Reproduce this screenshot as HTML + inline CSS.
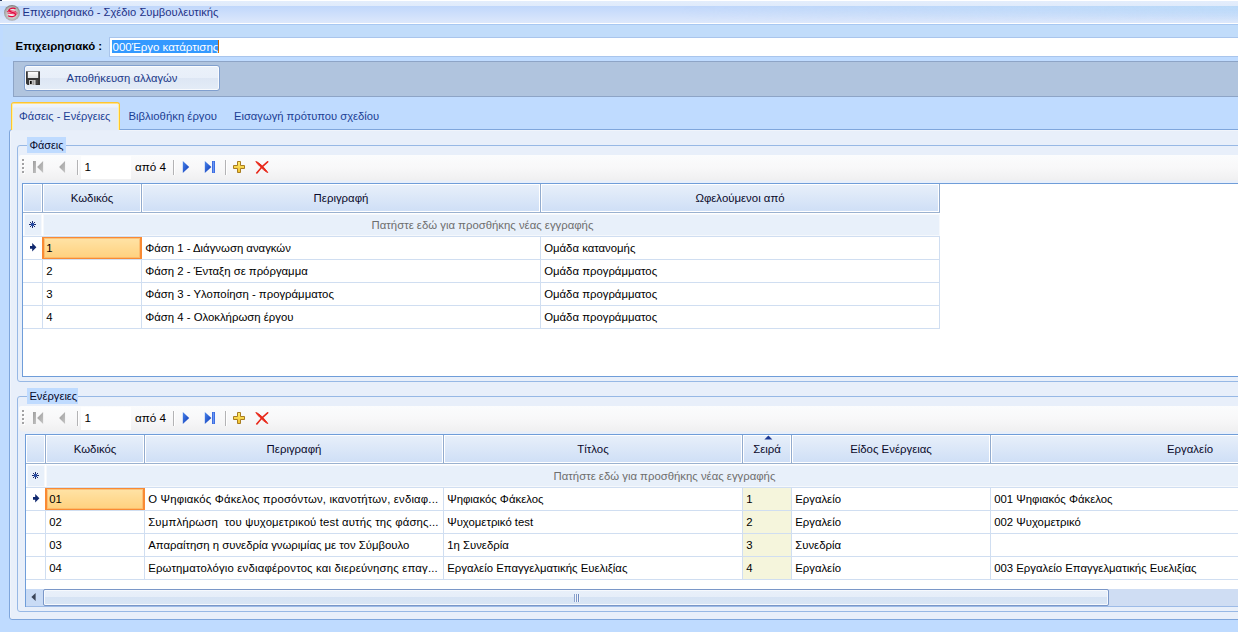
<!DOCTYPE html>
<html lang="el">
<head>
<meta charset="utf-8">
<title>Επιχειρησιακό - Σχέδιο Συμβουλευτικής</title>
<style>
*{box-sizing:border-box;margin:0;padding:0}
html,body{width:1238px;height:632px;overflow:hidden}
body{background:#BFDBFF;font-family:"Liberation Sans",sans-serif;font-size:11.2px;color:#000;position:relative}
.a{position:absolute;white-space:nowrap}
.t{position:absolute;white-space:nowrap;line-height:14px;height:14px}
#title{left:0;top:0;width:1238px;height:24px;background:linear-gradient(#fff 0,#fff 1px,#E3EDFC 1px,#E0EBFB 6px,#C0D7FB 6px,#DDE8FB 23px,#fff 23px,#fff 24px)}
#tgrad{left:0;top:6px;width:1238px;height:17px;background:linear-gradient(#BBDAF8,rgba(205,226,250,0) 90%);-webkit-mask-image:linear-gradient(90deg,transparent 55%,#000);mask-image:linear-gradient(90deg,transparent 55%,#000)}
#tline{left:0;top:24px;width:1238px;height:1px;background:#A8C8F2}
#corner{left:0;top:0;width:2px;height:1px;background:#2A3A60}
#ttext{left:22.5px;top:5px;color:#1E3287;font-size:11.2px}
#toparea{left:3px;top:25px;width:1240px;height:32px;background:#C1DCFA}
#lbl{left:15.6px;top:39px;font-weight:bold;font-size:11.4px}
#tb{left:109px;top:37px;width:1140px;height:20px;background:#fff;border:1px solid #A9C5EC}
#sel{left:112px;top:40px;width:106px;height:13px;background:#3399FF}
#caret{left:218px;top:40px;width:1px;height:13px;background:#C86400}
#tbt{left:112.5px;top:40px;color:#fff;font-size:11.5px}
#panel{left:13px;top:61px;width:1240px;height:36px;background:#B0C4DE;border:1px solid #8DA4C6}
#btn{left:24px;top:65px;width:196px;height:26px;border:1px solid #809FCE;border-radius:3px;background:linear-gradient(#EBF1FA 0,#E8EFF9 48%,#DDE6F4 50%,#E4ECF7 100%);box-shadow:inset 0 0 0 1px rgba(255,255,255,.75)}
#btnt{left:24px;width:196px;top:71px;text-align:center;color:#1C3A8A;font-size:11.24px}
#tab1{left:11px;top:102px;width:109px;height:28px;border:1px solid #FFC62E;border-bottom:none;border-radius:3px 3px 0 0;background:linear-gradient(#F1F5FC 0,#EDF2FB 14%,#E3EBF8 20%,#E2EBF8 100%);box-shadow:inset 0 1px 0 #FFE08A}
#tab1:before,#tab1:after{content:'';position:absolute;top:1px;width:1px;height:26px;background:linear-gradient(#FFF0A0,#FFF3A8)}
#tabcov{left:12px;top:130px;width:107px;height:1px;background:#E7EEF9}
#tab1:before{left:0}#tab1:after{right:0}
.tabt{top:109px;color:#1C3E94}
#tabpage{left:9px;top:129px;width:1240px;height:491px;background:#E8EFFA;border:1px solid #7FA6DC;border-radius:3px;box-shadow:inset 1px 1px 0 #F0F4FB}
.gb{border:1px solid #97B8E5;border-radius:3px}
.gbl{background:#BFDBFF;height:16px;line-height:17px;color:#05082A}
.bar{height:25px;border-radius:2px 0 0 4px;background:linear-gradient(#FBFCFD,#F8F8F9 50%,#F0F0F1);box-shadow:0 1px 0 #ECEFF5}
.dot{width:2px;height:2px;background:#A2A2A4;box-shadow:1px 1px 0 #fff}
.sep{width:1px;height:15px;background:#B3B3B5;box-shadow:1px 0 0 #fff}
.num{background:#fff;width:50px;height:23px}
.bt{font-size:11.7px;color:#000}
.grid{background:#fff;border:1px solid #6F9DD9;overflow:hidden}
.hc{top:1px;height:28px;border:1px solid #fff;background:linear-gradient(#E7EFFA 0,#DBE7F8 50%,#CFDFF6 100%);text-align:center;line-height:27px;color:#0A0A2A;font-size:11.4px}
.hs{top:1px;width:1px;height:28px;background:#92ABCE}
.hb{left:0;height:1px;background:#9AB1CF}
.nr{background:#E8F0FA;height:22px;border:1px solid #F5F8FC}
.nrt{height:22px;text-align:center;line-height:22px;color:#6E6E6E;font-size:11.35px;z-index:2}
.hl{left:0;height:1px;background:#D0DEF1}
.vl{width:1px;background:#D0DEF1}
.c{height:22px;line-height:22px;overflow:hidden;white-space:nowrap;font-size:11.35px}
.selc{border:1px solid #F98A33;border-right-width:2px;border-left-width:2px;background:linear-gradient(#FFE3A6,#FFD17E);box-shadow:inset 0 0 0 1px rgba(250,170,90,.55)}
.beige{background:#F5F5DC}
</style>
</head>
<body>
<div class="a" id="title"></div><div class="a" id="tgrad"></div><div class="a" id="tline"></div><div class="a" id="corner"></div>
<svg class="a" style="left:4px;top:5px" width="16" height="16" viewBox="0 0 16 16">
<defs><radialGradient id="rg" cx="50%" cy="55%" r="52%"><stop offset="0" stop-color="#F2F2F2"/><stop offset=".55" stop-color="#CDCDCD"/><stop offset=".85" stop-color="#ABABAB"/><stop offset="1" stop-color="#858585"/></radialGradient></defs>
<circle cx="8" cy="7.9" r="7.9" fill="url(#rg)"/>
<ellipse cx="8" cy="7.9" rx="3.6" ry="3.9" fill="#F4F4F4" opacity=".8"/>
<path d="M11.6 3.7C9.2 2.5 5.2 3.3 4.8 5.3C4.6 7.2 11.8 7.3 11.7 9.7C11.3 11.9 6.4 12.1 4.1 10.8" fill="none" stroke="#E2063C" stroke-width="1.25"/>
<path d="M2.9 6.5L13.6 8.1M3.6 8.1L12.6 9.2M4.4 5.4L12.2 6.5" stroke="#E2063C" stroke-width=".8" fill="none"/>
</svg>
<div class="t" id="ttext">Επιχειρησιακό - Σχέδιο Συμβουλευτικής</div>
<div class="a" id="toparea"></div>
<div class="t" id="lbl">Επιχειρησιακό :</div>
<div class="a" id="tb"></div><div class="a" id="sel"></div><div class="a" id="caret"></div>
<div class="t" id="tbt">000Έργο κατάρτισης</div>
<div class="a" id="panel"></div>
<div class="a" id="btn"></div>
<svg class="a" style="left:26px;top:71px" width="14" height="14" viewBox="0 0 14 14">
<defs><linearGradient id="lab" x1="0" y1="0" x2="0" y2="1"><stop offset="0" stop-color="#FFFFFF"/><stop offset="1" stop-color="#DDDFE0"/></linearGradient></defs>
<path d="M0 0H14V14H1.6L0 12.4Z" fill="#383838"/><rect x="0" y="0" width="14" height="1" fill="#6E6E6E"/>
<rect x="1.8" y="0.8" width="10.4" height="6.2" fill="url(#lab)"/>
<rect x="3" y="9" width="6.6" height="5" fill="#C6C6C6"/><rect x="4" y="10" width="1.7" height="3" fill="#080808"/><rect x="6.8" y="9.4" width="1" height="4.6" fill="#9A9A9A"/><rect x="10.6" y="9" width=".8" height="4" fill="#5C5C5C"/>
</svg>
<div class="t" id="btnt">Αποθήκευση αλλαγών</div>
<div class="a" id="tabpage"></div>
<div class="a" id="tab1"></div><div class="a" id="tabcov"></div>
<div class="t tabt" style="left:19px;font-size:11px">Φάσεις - Ενέργειες</div>
<div class="t tabt" style="left:128.5px;font-size:11.35px">Βιβλιοθήκη έργου</div>
<div class="t tabt" style="left:234px">Εισαγωγή πρότυπου σχεδίου</div>
<div class="a gb" style="left:17px;top:145px;width:1240px;height:237px"></div>
<div class="a gbl" style="left:27px;top:137px;width:39px;padding-left:2.4px;font-size:10.85px">Φάσεις</div>
<div class="a bar" style="left:19px;top:155px;width:1230px"></div>
<div class="a dot" style="left:22px;top:159px"></div>
<div class="a dot" style="left:22px;top:163px"></div>
<div class="a dot" style="left:22px;top:167px"></div>
<div class="a dot" style="left:22px;top:171px"></div>
<svg class="a" style="left:33px;top:161px" width="11" height="12" viewBox="0 0 11 12"><defs><linearGradient id="gg155" x1="0" y1="0" x2="1" y2="1"><stop offset="0" stop-color="#9C9C9C"/><stop offset="1" stop-color="#C4C4C4"/></linearGradient></defs><rect x="0" y="0" width="3" height="12" fill="url(#gg155)"/><path d="M10.1 0L10.1 12L4.1 6Z" fill="url(#gg155)"/></svg>
<svg class="a" style="left:58px;top:161px" width="8" height="12" viewBox="0 0 8 12"><path d="M7.05 0L7.05 12L1.1 6Z" fill="url(#gg155)"/></svg>
<div class="a sep" style="left:77px;top:160px"></div>
<div class="a num" style="left:81px;top:156px"></div>
<div class="t bt" style="left:84.6px;top:160px">1</div>
<div class="t bt" style="left:135px;top:160px">από 4</div>
<div class="a sep" style="left:173px;top:160px"></div>
<svg class="a" style="left:182px;top:161px" width="8" height="12" viewBox="0 0 8 12"><defs><linearGradient id="bg155" x1="0" y1="0" x2="1" y2="1"><stop offset="0" stop-color="#4A86EC"/><stop offset="1" stop-color="#0C36B4"/></linearGradient></defs><path d="M0.8 0L0.8 12L7.2 6Z" fill="url(#bg155)"/></svg>
<svg class="a" style="left:204px;top:161px" width="11" height="12" viewBox="0 0 11 12"><path d="M0.8 0L0.8 12L7.4 6Z" fill="url(#bg155)"/><rect x="8" y="0" width="3" height="12" fill="#3E6EE2"/><rect x="9" y="0.5" width="1" height="11" fill="#6C98F0"/></svg>
<div class="a sep" style="left:225px;top:160px"></div>
<svg class="a" style="left:232px;top:160px" width="14" height="14" viewBox="0 0 14 14"><defs><linearGradient id="yg155" x1="0" y1="0" x2="0" y2="1"><stop offset="0" stop-color="#FFEE70"/><stop offset="1" stop-color="#F2C02C"/></linearGradient></defs><path d="M5.5 1.5h3v4h4v3h-4v4h-3v-4h-4v-3h4z" fill="url(#yg155)" stroke="#A87C22" stroke-width="1"/></svg>
<svg class="a" style="left:255px;top:160px" width="14" height="14" viewBox="0 0 14 14"><path d="M0.8 1.6C3 1.4 10.6 8.8 12.8 12.6C10 11.8 2.4 4.2 0.8 1.6Z" fill="#E8281A" stroke="#E8281A" stroke-width=".9" stroke-linejoin="round"/><path d="M12.6 1.8C9 4.6 4.4 9.4 1.8 12.9" stroke="#E8281A" stroke-width="1.7" stroke-linecap="round" fill="none"/></svg>
<div class="a grid" style="left:22px;top:183px;width:1238px;height:194px">
<div class="a hc" style="left:0px;top:0;width:19px"></div>
<div class="a hs" style="left:19px;top:0"></div>
<div class="a hc" style="left:20px;top:0;width:98px">Κωδικός</div>
<div class="a hs" style="left:118px;top:0"></div>
<div class="a hc" style="left:119px;top:0;width:398px">Περιγραφή</div>
<div class="a hs" style="left:517px;top:0"></div>
<div class="a hc" style="left:518px;top:0;width:398px">Ωφελούμενοι από</div>
<div class="a hs" style="left:916px;top:0"></div>
<div class="a hb" style="top:28px;width:917px"></div>
<div class="a nr" style="left:1px;top:30px;width:18px"></div>
<div class="a nrt" style="left:309.5px;top:30px;width:300px">Πατήστε εδώ για προσθήκης νέας εγγραφής</div>
<svg class="a" style="left:6px;top:37px" width="7" height="7" viewBox="0 0 7 7"><path d="M3.5 0V7M0 3.5H7M1 1L6 6M6 1L1 6" stroke="#1B2A6B" stroke-width="1"/><circle cx="3.5" cy="3.5" r="1.7" fill="#2A50A8"/></svg>
<div class="a nr" style="left:20px;top:30px;width:897px"></div>
<div class="a hl" style="top:52px;width:917px"></div>
<div class="a hl" style="top:75px;width:917px"></div>
<div class="a c" style="left:20px;top:53px;width:98px;padding-left:3.2px">1</div>
<div class="a c" style="left:119px;top:53px;width:398px;padding-left:3.2px">Φάση 1 - Διάγνωση αναγκών</div>
<div class="a c" style="left:518px;top:53px;width:398px;padding-left:3.2px">Ομάδα κατανομής</div>
<div class="a hl" style="top:98px;width:917px"></div>
<div class="a c" style="left:20px;top:76px;width:98px;padding-left:3.2px">2</div>
<div class="a c" style="left:119px;top:76px;width:398px;padding-left:3.2px">Φάση 2 - Ένταξη σε πρόργαμμα</div>
<div class="a c" style="left:518px;top:76px;width:398px;padding-left:3.2px">Ομάδα προγράμματος</div>
<div class="a hl" style="top:121px;width:917px"></div>
<div class="a c" style="left:20px;top:99px;width:98px;padding-left:3.2px">3</div>
<div class="a c" style="left:119px;top:99px;width:398px;padding-left:3.2px">Φάση 3 - Υλοποίηση - προγράμματος</div>
<div class="a c" style="left:518px;top:99px;width:398px;padding-left:3.2px">Ομάδα προγράμματος</div>
<div class="a hl" style="top:144px;width:917px"></div>
<div class="a c" style="left:20px;top:122px;width:98px;padding-left:3.2px">4</div>
<div class="a c" style="left:119px;top:122px;width:398px;padding-left:3.2px">Φάση 4 - Ολοκλήρωση έργου</div>
<div class="a c" style="left:518px;top:122px;width:398px;padding-left:3.2px">Ομάδα προγράμματος</div>
<div class="a vl" style="left:19px;top:52px;height:93px"></div>
<div class="a vl" style="left:118px;top:52px;height:93px"></div>
<div class="a vl" style="left:517px;top:52px;height:93px"></div>
<div class="a vl" style="left:916px;top:52px;height:93px"></div>
<div class="a c selc" style="left:19px;top:53px;width:100px;height:22px;line-height:20px;padding-left:2.2px">1</div>
<svg class="a" style="left:7px;top:59px" width="7" height="9" viewBox="0 0 7 9"><path d="M2.2 0L6.4 4.3L2.2 8.6V5.7H0V2.9H2.2Z" fill="#10286E"/></svg>
</div>
<div class="a gb" style="left:17px;top:396px;width:1240px;height:216px"></div>
<div class="a gbl" style="left:27px;top:388px;width:51px;padding-left:2.4px;font-size:11.2px">Ενέργειες</div>
<div class="a bar" style="left:19px;top:406px;width:1230px"></div>
<div class="a dot" style="left:22px;top:410px"></div>
<div class="a dot" style="left:22px;top:414px"></div>
<div class="a dot" style="left:22px;top:418px"></div>
<div class="a dot" style="left:22px;top:422px"></div>
<svg class="a" style="left:33px;top:412px" width="11" height="12" viewBox="0 0 11 12"><defs><linearGradient id="gg406" x1="0" y1="0" x2="1" y2="1"><stop offset="0" stop-color="#9C9C9C"/><stop offset="1" stop-color="#C4C4C4"/></linearGradient></defs><rect x="0" y="0" width="3" height="12" fill="url(#gg406)"/><path d="M10.1 0L10.1 12L4.1 6Z" fill="url(#gg406)"/></svg>
<svg class="a" style="left:58px;top:412px" width="8" height="12" viewBox="0 0 8 12"><path d="M7.05 0L7.05 12L1.1 6Z" fill="url(#gg406)"/></svg>
<div class="a sep" style="left:77px;top:411px"></div>
<div class="a num" style="left:81px;top:407px"></div>
<div class="t bt" style="left:84.6px;top:411px">1</div>
<div class="t bt" style="left:135px;top:411px">από 4</div>
<div class="a sep" style="left:173px;top:411px"></div>
<svg class="a" style="left:182px;top:412px" width="8" height="12" viewBox="0 0 8 12"><defs><linearGradient id="bg406" x1="0" y1="0" x2="1" y2="1"><stop offset="0" stop-color="#4A86EC"/><stop offset="1" stop-color="#0C36B4"/></linearGradient></defs><path d="M0.8 0L0.8 12L7.2 6Z" fill="url(#bg406)"/></svg>
<svg class="a" style="left:204px;top:412px" width="11" height="12" viewBox="0 0 11 12"><path d="M0.8 0L0.8 12L7.4 6Z" fill="url(#bg406)"/><rect x="8" y="0" width="3" height="12" fill="#3E6EE2"/><rect x="9" y="0.5" width="1" height="11" fill="#6C98F0"/></svg>
<div class="a sep" style="left:225px;top:411px"></div>
<svg class="a" style="left:232px;top:411px" width="14" height="14" viewBox="0 0 14 14"><defs><linearGradient id="yg406" x1="0" y1="0" x2="0" y2="1"><stop offset="0" stop-color="#FFEE70"/><stop offset="1" stop-color="#F2C02C"/></linearGradient></defs><path d="M5.5 1.5h3v4h4v3h-4v4h-3v-4h-4v-3h4z" fill="url(#yg406)" stroke="#A87C22" stroke-width="1"/></svg>
<svg class="a" style="left:255px;top:411px" width="14" height="14" viewBox="0 0 14 14"><path d="M0.8 1.6C3 1.4 10.6 8.8 12.8 12.6C10 11.8 2.4 4.2 0.8 1.6Z" fill="#E8281A" stroke="#E8281A" stroke-width=".9" stroke-linejoin="round"/><path d="M12.6 1.8C9 4.6 4.4 9.4 1.8 12.9" stroke="#E8281A" stroke-width="1.7" stroke-linecap="round" fill="none"/></svg>
<div class="a grid" style="left:25px;top:434px;width:1235px;height:173px">
<div class="a hc" style="left:0px;top:0;width:19px"></div>
<div class="a hs" style="left:19px;top:0"></div>
<div class="a hc" style="left:20px;top:0;width:98px">Κωδικός</div>
<div class="a hs" style="left:118px;top:0"></div>
<div class="a hc" style="left:119px;top:0;width:298px">Περιγραφή</div>
<div class="a hs" style="left:417px;top:0"></div>
<div class="a hc" style="left:418px;top:0;width:298px">Τίτλος</div>
<div class="a hs" style="left:716px;top:0"></div>
<div class="a hc" style="left:717px;top:0;width:48px">Σειρά</div>
<div class="a hs" style="left:765px;top:0"></div>
<div class="a hc" style="left:766px;top:0;width:198px">Είδος Ενέργειας</div>
<div class="a hs" style="left:964px;top:0"></div>
<div class="a hc" style="left:965px;top:0;width:398px">Εργαλείο</div>
<div class="a hs" style="left:1363px;top:0"></div>
<div class="a hb" style="top:28px;width:1364px"></div>
<div class="a nr" style="left:1px;top:30px;width:18px"></div>
<div class="a nrt" style="left:488.5px;top:30px;width:300px">Πατήστε εδώ για προσθήκης νέας εγγραφής</div>
<svg class="a" style="left:6px;top:37px" width="7" height="7" viewBox="0 0 7 7"><path d="M3.5 0V7M0 3.5H7M1 1L6 6M6 1L1 6" stroke="#1B2A6B" stroke-width="1"/><circle cx="3.5" cy="3.5" r="1.7" fill="#2A50A8"/></svg>
<div class="a nr" style="left:20px;top:30px;width:1344px"></div>
<div class="a hl" style="top:52px;width:1364px"></div>
<div class="a hl" style="top:75px;width:1364px"></div>
<div class="a c" style="left:20px;top:53px;width:98px;padding-left:3.2px">01</div>
<div class="a c" style="left:119px;top:53px;width:298px;padding-left:3.2px;letter-spacing:0.17px">Ο Ψηφιακός Φάκελος προσόντων, ικανοτήτων, ενδιαφ...</div>
<div class="a c" style="left:418px;top:53px;width:298px;padding-left:3.2px">Ψηφιακός Φάκελος</div>
<div class="a c beige" style="left:717px;top:53px;width:48px;padding-left:3.2px">1</div>
<div class="a c" style="left:766px;top:53px;width:198px;padding-left:3.2px">Εργαλείο</div>
<div class="a c" style="left:965px;top:53px;width:398px;padding-left:3.2px">001 Ψηφιακός Φάκελος</div>
<div class="a hl" style="top:98px;width:1364px"></div>
<div class="a c" style="left:20px;top:76px;width:98px;padding-left:3.2px">02</div>
<div class="a c" style="left:119px;top:76px;width:298px;padding-left:3.2px;letter-spacing:0.16px">Συμπλήρωση&nbsp; του ψυχομετρικού test αυτής της φάσης...</div>
<div class="a c" style="left:418px;top:76px;width:298px;padding-left:3.2px">Ψυχομετρικό test</div>
<div class="a c beige" style="left:717px;top:76px;width:48px;padding-left:3.2px">2</div>
<div class="a c" style="left:766px;top:76px;width:198px;padding-left:3.2px">Εργαλείο</div>
<div class="a c" style="left:965px;top:76px;width:398px;padding-left:3.2px">002 Ψυχομετρικό</div>
<div class="a hl" style="top:121px;width:1364px"></div>
<div class="a c" style="left:20px;top:99px;width:98px;padding-left:3.2px">03</div>
<div class="a c" style="left:119px;top:99px;width:298px;padding-left:3.2px">Απαραίτηση η συνεδρία γνωριμίας με τον Σύμβουλο</div>
<div class="a c" style="left:418px;top:99px;width:298px;padding-left:3.2px">1η Συνεδρία</div>
<div class="a c beige" style="left:717px;top:99px;width:48px;padding-left:3.2px">3</div>
<div class="a c" style="left:766px;top:99px;width:198px;padding-left:3.2px">Συνεδρία</div>
<div class="a c" style="left:965px;top:99px;width:398px;padding-left:3.2px"></div>
<div class="a hl" style="top:144px;width:1364px"></div>
<div class="a c" style="left:20px;top:122px;width:98px;padding-left:3.2px">04</div>
<div class="a c" style="left:119px;top:122px;width:298px;padding-left:3.2px;letter-spacing:0.18px">Ερωτηματολόγιο ενδιαφέροντος και διερεύνησης επαγ...</div>
<div class="a c" style="left:418px;top:122px;width:298px;padding-left:3.2px">Εργαλείο Επαγγελματικής Ευελιξίας</div>
<div class="a c beige" style="left:717px;top:122px;width:48px;padding-left:3.2px">4</div>
<div class="a c" style="left:766px;top:122px;width:198px;padding-left:3.2px">Εργαλείο</div>
<div class="a c" style="left:965px;top:122px;width:398px;padding-left:3.2px">003 Εργαλείο Επαγγελματικής Ευελιξίας</div>
<div class="a vl" style="left:19px;top:52px;height:93px"></div>
<div class="a vl" style="left:118px;top:52px;height:93px"></div>
<div class="a vl" style="left:417px;top:52px;height:93px"></div>
<div class="a vl" style="left:716px;top:52px;height:93px"></div>
<div class="a vl" style="left:765px;top:52px;height:93px"></div>
<div class="a vl" style="left:964px;top:52px;height:93px"></div>
<div class="a vl" style="left:1363px;top:52px;height:93px"></div>
<div class="a c selc" style="left:19px;top:53px;width:100px;height:22px;line-height:20px;padding-left:2.2px">01</div>
<svg class="a" style="left:7px;top:59px" width="7" height="9" viewBox="0 0 7 9"><path d="M2.2 0L6.4 4.3L2.2 8.6V5.7H0V2.9H2.2Z" fill="#10286E"/></svg>
<svg class="a" style="left:737.6px;top:0px" width="9" height="5" viewBox="0 0 9 5"><path d="M0.4 4.6L4.4 0.4L8.4 4.6Z" fill="#1E3A94"/></svg>
<div class="a" style="left:0;top:154px;width:1240px;height:17px;background:#CFDDF3"></div>
<div class="a" style="left:0;top:154px;width:17px;height:17px;background:#C9DBF5"></div>
<svg class="a" style="left:4.7px;top:158px" width="5" height="8" viewBox="0 0 5 8"><path d="M4.6 0V8L0.4 4Z" fill="#3A4458"/></svg>
<div class="a" style="left:17px;top:154px;width:1066px;height:17px;border:1px solid #7A97C8;border-radius:2px;background:linear-gradient(#E9F0FA 0,#E6EEF9 45%,#D6E3F4 50%,#DAE6F5 100%);box-shadow:inset 0 0 0 1px #F6F9FD"></div>
<div class="a" style="left:548px;top:159px;width:1px;height:8px;background:#8CA4CE;box-shadow:2px 0 0 #8099C8,4px 0 0 #6F8BC0,1px 0 0 #F2F6FC,3px 0 0 #F2F6FC,5px 0 0 #F2F6FC"></div>
</div>
<div class="a" style="left:26px;top:606px;width:1220px;height:1px;background:#9DBBE7"></div>
</body>
</html>
